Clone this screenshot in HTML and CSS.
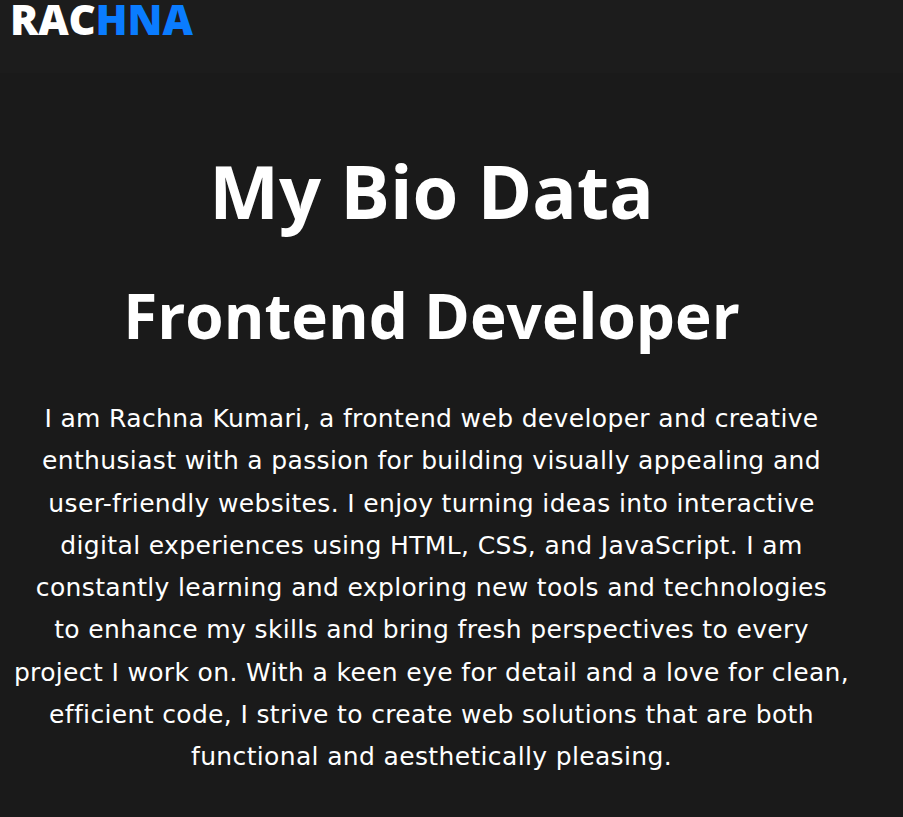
FILE: index.html
```html
<!DOCTYPE html>
<html lang="en">
<head>
<meta charset="utf-8">
<title>Rachna - Bio Data</title>
<link rel="stylesheet" href="styles.css">
</head>
<body>
<header class="topbar">
  <div class="logo">RAC<span class="logo-accent">HNA</span></div>
</header>
<main class="bio">
  <h1 class="bio-title">My Bio Data</h1>
  <h2 class="bio-role">Frontend Developer</h2>
  <p class="bio-text">I am Rachna Kumari, a frontend web developer and creative<br>
  enthusiast with a passion for building visually appealing and<br>
  user-friendly websites. I enjoy turning ideas into interactive<br>
  digital experiences using HTML, CSS, and JavaScript. I am<br>
  constantly learning and exploring new tools and technologies<br>
  to enhance my skills and bring fresh perspectives to every<br>
  project I work on. With a keen eye for detail and a love for clean,<br>
  efficient code, I strive to create web solutions that are both<br>
  functional and aesthetically pleasing.</p>
</main>
</body>
</html>
```
FILE: styles.css
```css
html, body {
  margin: 0;
  padding: 0;
  background: #1a1a1a;
  color: #ffffff;
  font-family: "Open Sans", "Liberation Sans", sans-serif;
}

.topbar {
  height: 73px;
  background: #1c1c1c;
  display: flex;
  align-items: flex-start;
  padding-left: 10px;
}

.logo {
  font-weight: 800;
  font-size: 42px;
  line-height: 38px;
  letter-spacing: -0.2px;
  color: #ffffff;
}

.logo-accent {
  color: #0a7cff;
}

.bio {
  width: 863px;
  text-align: center;
  display: flex;
  flex-direction: column;
  align-items: center;
}

.bio-title {
  margin: 73px 0 0;
  font-size: 74px;
  font-weight: 700;
  line-height: 90px;
  letter-spacing: 0;
}

.bio-role {
  margin: 41px 0 0;
  font-size: 62px;
  font-weight: 700;
  line-height: 76px;
}

.bio-text {
  margin: 45px 0 0;
  font-family: "DejaVu Sans", "Open Sans", sans-serif;
  font-size: 25px;
  line-height: 42.25px;
  letter-spacing: 0.35px;
  font-weight: 400;
}
```
